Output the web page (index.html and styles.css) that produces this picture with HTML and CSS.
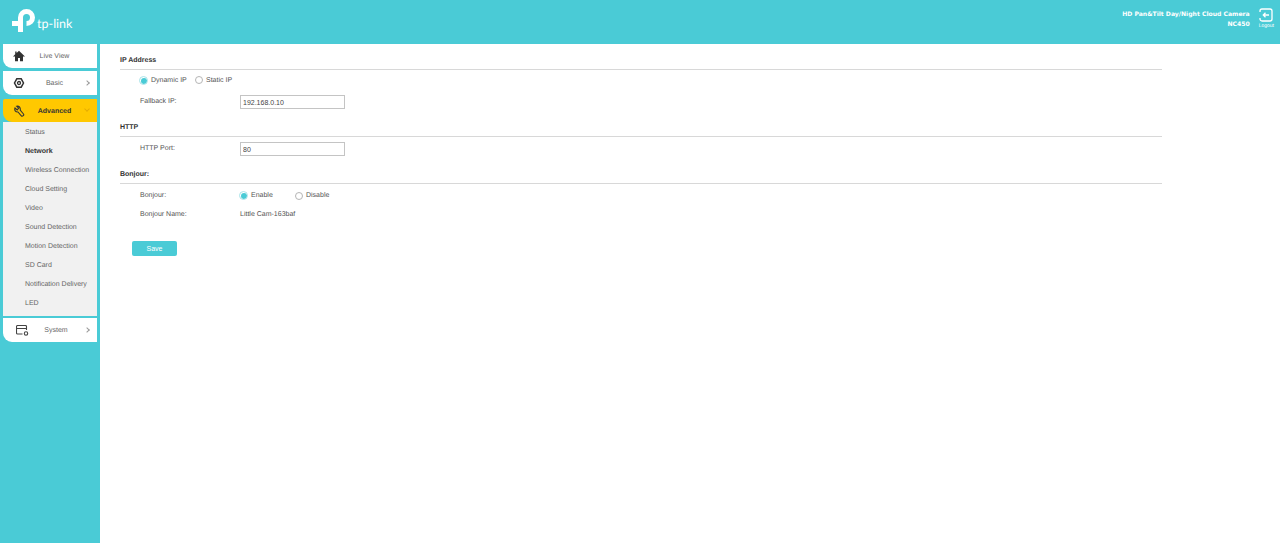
FILE: index.html
```html
<!DOCTYPE html>
<html lang="en">
<head>
    <meta charset="UTF-8">
    <meta name="viewport" content="width=device-width, initial-scale=1.0">
    <title>TP-Link NC450</title>
    <link rel="stylesheet" href="styles.css">
</head>
<body>
    <header class="top-bar">
        <div class="logo">
            <svg class="logo-mark" width="23" height="23" viewBox="0 0 23 23" fill="none" stroke="#fff" stroke-width="5">
                <path d="M8.5 23V8.500a6 6 0 1 1 6 6"/>
                <path d="M0 14.500h8.500"/>
            </svg>
            <span class="logo-text">tp-link</span>
        </div>
        <div class="device">
            <div>HD Pan&amp;Tilt Day/Night Cloud Camera</div>
            <div>NC450</div>
        </div>
        <div class="logout">
            <svg width="14" height="14" viewBox="0 0 14 14" fill="none" stroke="#fff" stroke-width="1.300">
                <path d="M1 4V3a2 2 0 0 1 2-2h8a2 2 0 0 1 2 2v8a2 2 0 0 1-2 2H3a2 2 0 0 1-2-2v-1"/>
                <path d="M10 7H4.500M6.500 4.800L4.300 7l2.200 2.200"/>
            </svg>
            <span>Logout</span>
        </div>
    </header>

    <div class="page">
        <nav class="sidebar">
            <div class="nav-item">
                <svg class="nav-icon" width="12" height="12" viewBox="0 0 12 12">
                    <path d="M6 .8L3.600 3V1.500H2.200v2.800L.3 6.200l.7.7 1-.9v5.200h3V8h2v3.200h3V6l1 .9.700-.7z" fill="#333"/>
                </svg>
                <span class="nav-label">Live View</span>
            </div>
            <div class="nav-item">
                <svg class="nav-icon" width="12" height="12" viewBox="0 0 12 12" fill="none" stroke="#333">
                    <path stroke-width="1.500" d="M3.800 1.800h4.400L10.500 6 8.200 10.200H3.800L1.500 6z"/>
                    <circle stroke-width="1.300" cx="6" cy="6" r="1.500"/>
                </svg>
                <span class="nav-label">Basic</span>
                <span class="chevron"></span>
            </div>
            <div class="nav-group">
                <div class="nav-item nav-active">
                    <svg class="nav-icon" width="12" height="12" viewBox="0 0 12 12" fill="none" stroke="#333" stroke-width="1.100">
                        <path d="M3.600 1.200L5.600 3.200 4.200 5 2 3C1.200 5 2.400 7.200 5 7L8.500 11C9.500 11.800 11.400 10 10.500 9L7.200 5.200C7.800 2.600 5.800.6 3.600 1.200z"/>
                    </svg>
                    <span class="nav-label">Advanced</span>
                    <span class="chevron chevron-down"></span>
                </div>
                <ul class="sub-menu">
                    <li>Status</li>
                    <li class="current">Network</li>
                    <li>Wireless Connection</li>
                    <li>Cloud Setting</li>
                    <li>Video</li>
                    <li>Sound Detection</li>
                    <li>Motion Detection</li>
                    <li>SD Card</li>
                    <li>Notification Delivery</li>
                    <li>LED</li>
                </ul>
            </div>
            <div class="nav-item">
                <svg class="nav-icon nav-icon-wide" width="13" height="11" viewBox="0 0 13 11" fill="none" stroke="#444" stroke-width="1.100">
                    <path d="M6.500 9H1.500a1 1 0 0 1-1-1V1.500a1 1 0 0 1 1-1h8a1 1 0 0 1 1 1V5M.5 3.500h10"/>
                    <circle cx="10" cy="8.500" r="1.700"/>
                </svg>
                <span class="nav-label">System</span>
                <span class="chevron"></span>
            </div>
        </nav>

        <main class="content">
            <section class="section">
                <h2 class="section-title">IP Address</h2>
                <div class="radio-row">
                    <label class="radio radio-on">Dynamic IP</label>
                    <label class="radio">Static IP</label>
                </div>
                <div class="form-row form-row-input form-row-gap">
                    <span class="form-label">Fallback IP:</span>
                    <input class="text-input" type="text" value="192.168.0.10">
                </div>
            </section>
            <section class="section">
                <h2 class="section-title">HTTP</h2>
                <div class="form-row form-row-input">
                    <span class="form-label">HTTP Port:</span>
                    <input class="text-input" type="text" value="80">
                </div>
            </section>
            <section class="section section-plain">
                <h2 class="section-title">Bonjour:</h2>
                <div class="form-row">
                    <span class="form-label">Bonjour:</span>
                    <label class="radio radio-on">Enable</label>
                    <label class="radio">Disable</label>
                </div>
                <div class="form-row">
                    <span class="form-label">Bonjour Name:</span>
                    <span>Little Cam-163baf</span>
                </div>
            </section>
            <button class="save-button">Save</button>
        </main>
    </div>
</body>
</html>
```

FILE: styles.css
```css
* {
    box-sizing: border-box;
}

body {
    margin: 0;
    background: #ffffff;
    font-family: 'Liberation Sans', Arial, sans-serif;
    font-size: 7px;
    color: #555555;
    height: 546px;
    overflow: hidden;
    text-rendering: geometricPrecision;
}

.top-bar {
    display: flex;
    align-items: center;
    height: 44px;
    background: #4acbd6;
    color: #ffffff;
    padding: 0 6px 0 12px;
}

.logo {
    display: flex;
    align-items: center;
    gap: 2px;
    margin-right: auto;
    padding-bottom: 3px;
}

.logo-text {
    font-family: 'Lato', sans-serif;
    font-size: 12.500px;
    padding-top: 5px;
}

.device {
    text-align: right;
    font-family: 'DejaVu Sans', sans-serif;
    font-weight: bold;
    font-size: 6.100px;
    line-height: 10px;
    margin-right: 9px;
    padding-bottom: 5px;
}

.logout {
    display: flex;
    flex-direction: column;
    align-items: center;
    gap: 1px;
    font-size: 5px;
    padding-bottom: 8px;
}

.page {
    display: flex;
    height: 499px;
}

.sidebar {
    width: 100px;
    flex-shrink: 0;
    background: #4acbd6;
    padding: 0 3px;
}

.nav-item {
    position: relative;
    display: flex;
    align-items: center;
    height: 24px;
    margin-bottom: 3px;
    background: #ffffff;
    border-bottom-left-radius: 9px;
    color: #666666;
}

.nav-icon {
    margin-left: 10px;
}

.nav-icon-wide {
    margin-left: 13px;
    margin-right: -1px;
}

.nav-label {
    flex: 1;
    text-align: center;
    padding-top: 1px;
    padding-right: 13px;
}

.chevron {
    position: absolute;
    right: 8px;
    top: 10px;
    width: 4px;
    height: 4px;
    border-top: 1px solid #999999;
    border-right: 1px solid #999999;
    transform: rotate(45deg);
}

.chevron-down {
    top: 8px;
    border-color: #e6ad00;
    transform: rotate(135deg);
}

.nav-group {
    margin-top: 4px;
    margin-bottom: 2px;
}

.nav-active {
    height: 23px;
    margin-bottom: 0;
    background: #ffc800;
    border-top-left-radius: 2px;
    color: #333333;
    font-weight: bold;
}

.sub-menu {
    list-style: none;
    margin: 0;
    padding: 1px 0 3px;
    background: #f1f1f1;
}

.sub-menu li {
    height: 19px;
    line-height: 19px;
    padding-left: 22px;
    color: #666666;
    white-space: nowrap;
}

.sub-menu .current {
    color: #333333;
    font-weight: bold;
}

.content {
    flex: 1;
    padding: 9px 118px 0 20px;
}

.section-title {
    margin: 0;
    height: 17px;
    line-height: 15px;
    padding-bottom: 1px;
    border-bottom: 1px solid #d8d8d8;
    font-size: 7px;
    color: #333333;
}

.section {
    margin-bottom: 7px;
}

.radio-row {
    display: flex;
    align-items: center;
    height: 20px;
    padding-left: 20px;
}

.radio {
    display: inline-flex;
    align-items: center;
    gap: 3px;
    width: 56px;
}

.radio::before {
    content: "";
    flex-shrink: 0;
    width: 6px;
    height: 6px;
    margin-left: -1px;
    border: 0.5px solid #b5b5b5;
    border-radius: 50%;
}

.radio-on::before {
    padding: 0.5px;
    border-color: #a8e3e9;
    background: #4acbd6;
    background-clip: content-box;
}

.form-row {
    display: flex;
    align-items: center;
    height: 19px;
    padding-left: 20px;
}

.form-row-input {
    height: 22px;
    margin-top: 1px;
}

.form-row-gap {
    margin-top: 1px;
}

.section-plain .section-title {
    margin-bottom: 2px;
}

.form-label {
    width: 100px;
}

.form-row-input .form-label {
    margin-top: -1px;
}

.text-input {
    width: 105px;
    height: 14px;
    padding: 0 2px;
    border: 1px solid #c4c4c4;
    background: #ffffff;
    font: inherit;
    color: #444444;
}

.save-button {
    display: block;
    width: 45px;
    height: 15px;
    margin: 17px 0 0 12px;
    padding: 0;
    border: none;
    border-radius: 2px;
    background: #4acbd6;
    color: #ffffff;
    font: inherit;
}
```
